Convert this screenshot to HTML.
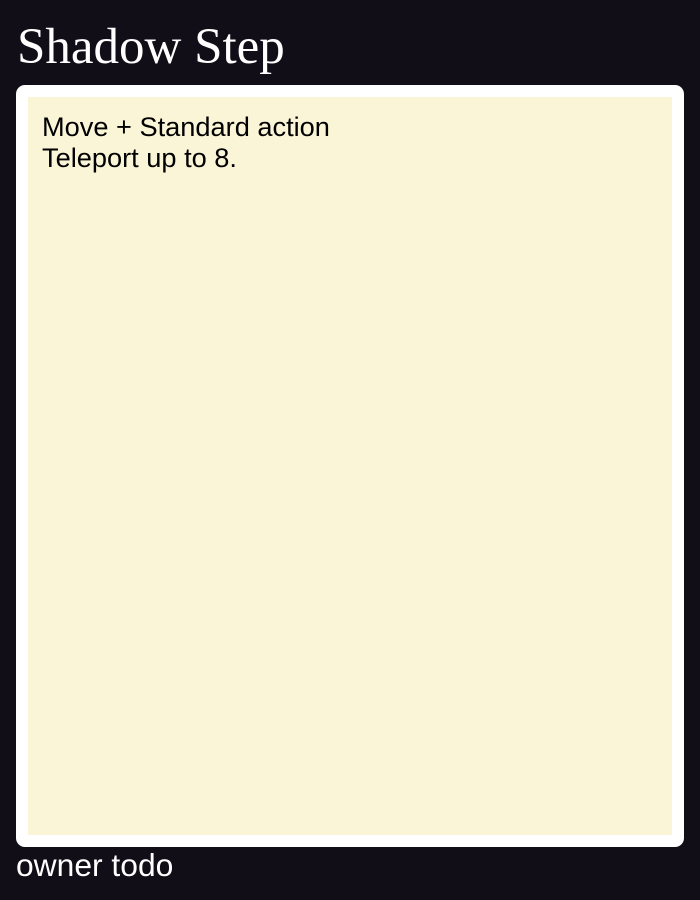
<!DOCTYPE html>
<html><head><style>
html,body{margin:0;padding:0;}
body{width:700px;height:900px;background:#110e18;position:relative;overflow:hidden;}
.t{position:absolute;left:17px;top:16px;font-family:"Liberation Sans",serif;font-family:"Liberation Serif",serif;font-size:51px;color:#fff;line-height:62px;white-space:nowrap;}
.card{position:absolute;left:16px;top:85px;width:668px;height:762px;background:#fff;border-radius:9px;}
.in{position:absolute;left:12px;top:12px;width:644px;height:738px;background:#faf5d6;}
.tx{position:absolute;left:14px;top:14px;font-family:"Liberation Sans",sans-serif;font-size:27.2px;line-height:31px;color:#000;white-space:nowrap;}
.o{position:absolute;left:16px;top:846px;font-family:"Liberation Sans",sans-serif;font-size:31.8px;line-height:38px;color:#fff;white-space:nowrap;}
</style></head><body>
<div class="t">Shadow Step</div>
<div class="card"><div class="in"><div class="tx">Move + Standard action<br>Teleport up to 8.</div></div></div>
<div class="o">owner todo</div>
</body></html>
